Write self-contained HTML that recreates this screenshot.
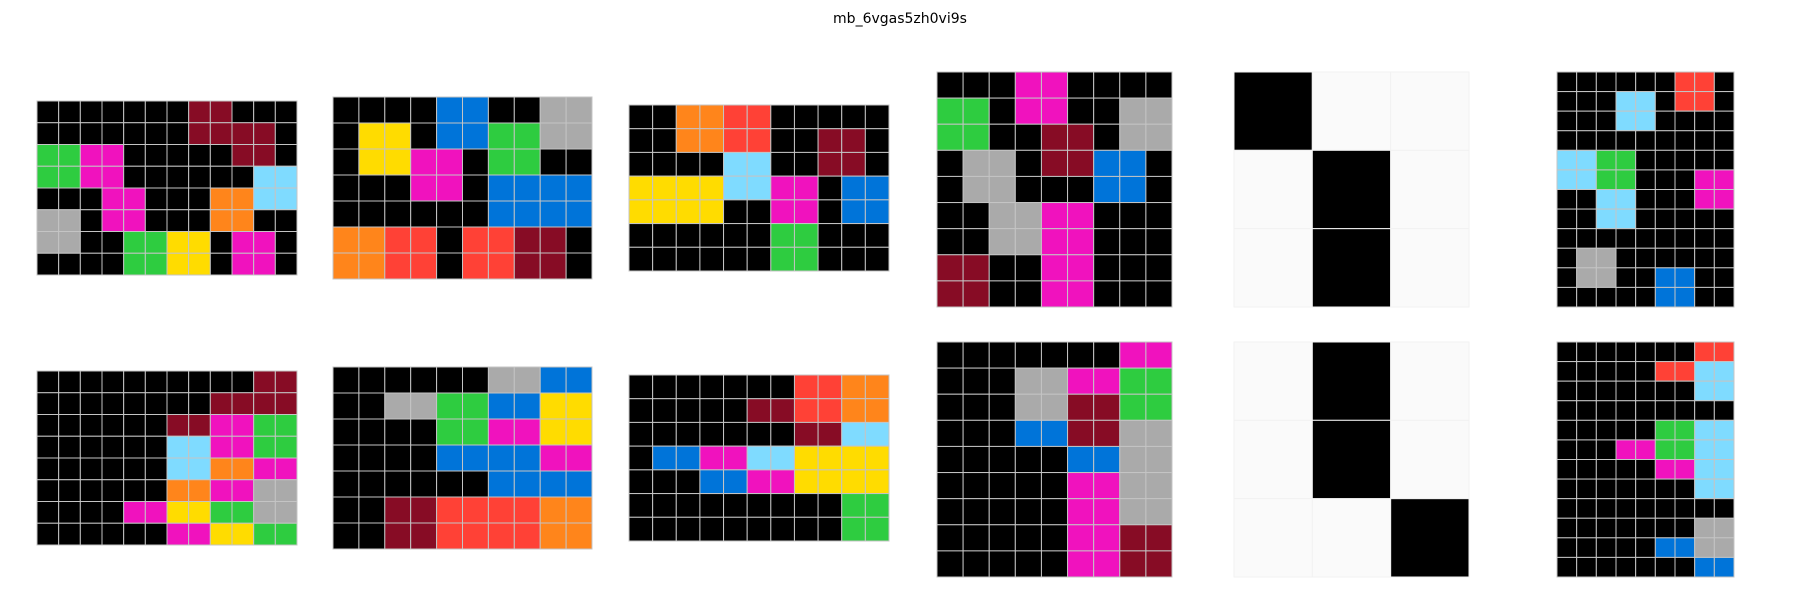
<!DOCTYPE html>
<html><head><meta charset="utf-8"><style>
html,body{margin:0;padding:0;background:#fff;width:1800px;height:600px;overflow:hidden}
</style></head><body>
<svg id="s" width="1800" height="600" xmlns="http://www.w3.org/2000/svg">
<text x="900" y="23" text-anchor="middle" font-family="DejaVu Sans, Liberation Sans, sans-serif" font-size="14" fill="#000">mb_6vgas5zh0vi9s</text>
</svg>
<script>
const C={K:'#000000',B:'#0074D9',R:'#FF4136',G:'#2ECC40',Y:'#FFDC00',A:'#AAAAAA',M:'#F012BE',O:'#FF851B',C:'#7FDBFF',W:'#870C25',L:'#FAFAFA'};
const P=[
[37,101,260,174,["KKKKKKKWWKKK","KKKKKKKWWWWK","GGMMKKKKKWWK","GGMMKKKKKKCC","KKKMMKKKOOCC","AAKMMKKKOOKK","AAKKGGYYKMMK","KKKKGGYYKMMK"]],
[333,97,259,182,["KKKKBBKKAA","KYYKBBGGAA","KYYMMKGGKK","KKKMMKBBBB","KKKKKKBBBB","OORRKRRWWK","OORRKRRWWK"]],
[629,105,260,166,["KKOORRKKKKK","KKOORRKKWWK","KKKKCCKKWWK","YYYYCCMMKBB","YYYYKKMMKBB","KKKKKKGGKKK","KKKKKKGGKKK"]],
[937,72,235,235,["KKKMMKKKK","GGKMMKKAA","GGKKWWKAA","KAAKWWBBK","KAAKKKBBK","KKAAMMKKK","KKAAMMKKK","WWKKMMKKK","WWKKMMKKK"]],
[1234,72,235,235,["KLL","LKL","LKL"]],
[1557,72,177,235,["KKKKKKRRK","KKKCCKRRK","KKKCCKKKK","KKKKKKKKK","CCGGKKKKK","CCGGKKKMM","KKCCKKKMM","KKCCKKKKK","KKKKKKKKK","KAAKKKKKK","KAAKKBBKK","KKKKKBBKK"]],
[37,371,260,174,["KKKKKKKKKKWW","KKKKKKKKWWWW","KKKKKKWWMMGG","KKKKKKCCMMGG","KKKKKKCCOOMM","KKKKKKOOMMAA","KKKKMMYYGGAA","KKKKKKMMYYGG"]],
[333,367,259,182,["KKKKKKAABB","KKAAGGBBYY","KKKKGGMMYY","KKKKBBBBMM","KKKKKKBBBB","KKWWRRRROO","KKWWRRRROO"]],
[629,375,260,166,["KKKKKKKRROO","KKKKKWWRROO","KKKKKKKWWCC","KBBMMCCYYYY","KKKBBMMYYYY","KKKKKKKKKGG","KKKKKKKKKGG"]],
[937,342,235,235,["KKKKKKKMM","KKKAAMMGG","KKKAAWWGG","KKKBBWWAA","KKKKKBBAA","KKKKKMMAA","KKKKKMMAA","KKKKKMMWW","KKKKKMMWW"]],
[1234,342,235,235,["LKL","LKL","LLK"]],
[1557,342,177,235,["KKKKKKKRR","KKKKKRRCC","KKKKKKKCC","KKKKKKKKK","KKKKKGGCC","KKKMMGGCC","KKKKKMMCC","KKKKKKKCC","KKKKKKKKK","KKKKKKKAA","KKKKKBBAA","KKKKKKKBB"]]
];
const s=document.getElementById('s');let h='';
for(const [x,y,w,hh,g] of P){const r=g.length,c=g[0].length,cw=w/c,ch=hh/r;
 const light=g.join('').includes('L');
 for(let i=0;i<r;i++)for(let j=0;j<c;j++){
  h+=`<rect x="${(x+j*cw).toFixed(2)}" y="${(y+i*ch).toFixed(2)}" width="${cw.toFixed(2)}" height="${ch.toFixed(2)}" fill="${C[g[i][j]]}" stroke="${light?'#f2f2f2':'#c4c4c4'}" stroke-width="1"/>`;}
}
s.insertAdjacentHTML('beforeend',h);
</script>
</body></html>
